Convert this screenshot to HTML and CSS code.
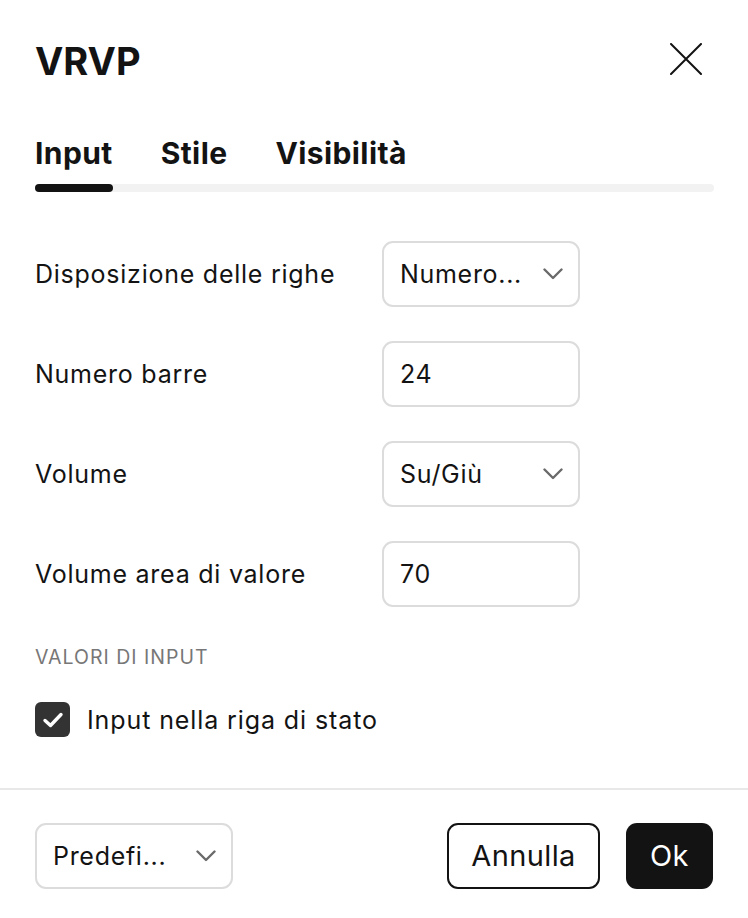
FILE: index.html
```html
<!DOCTYPE html>
<html lang="it">
<head>
<meta charset="utf-8">
<title>VRVP</title>
<link rel="stylesheet" href="styles.css">
</head>
<body>
<div class="dialog">
  <header class="head">
    <h1 class="title">VRVP</h1>
    <button class="close" aria-label="Chiudi">
      <svg width="32" height="32" viewBox="0 0 32 32"><path d="M1 1 L31 31 M31 1 L1 31" stroke="#131313" stroke-width="2" stroke-linecap="round" fill="none"/></svg>
    </button>
  </header>
  <nav class="tabs">
    <div class="tab-row">
      <span class="tab active">Input</span>
      <span class="tab">Stile</span>
      <span class="tab">Visibilità</span>
    </div>
    <div class="track"><div class="indicator"></div></div>
  </nav>
  <section class="body">
    <div class="row">
      <span class="label">Disposizione delle righe</span>
      <div class="field select"><span>Numero...</span><svg class="chev" width="20" height="12" viewBox="0 0 20 12"><path d="M1.5 1.5 L10 10 L18.5 1.5" stroke="#6a6a6a" stroke-width="2.4" fill="none" stroke-linecap="round" stroke-linejoin="round"/></svg></div>
    </div>
    <div class="row">
      <span class="label">Numero barre</span>
      <div class="field"><span>24</span></div>
    </div>
    <div class="row">
      <span class="label">Volume</span>
      <div class="field select"><span>Su/Giù</span><svg class="chev" width="20" height="12" viewBox="0 0 20 12"><path d="M1.5 1.5 L10 10 L18.5 1.5" stroke="#6a6a6a" stroke-width="2.4" fill="none" stroke-linecap="round" stroke-linejoin="round"/></svg></div>
    </div>
    <div class="row">
      <span class="label">Volume area di valore</span>
      <div class="field"><span>70</span></div>
    </div>
    <div class="section-title">VALORI DI INPUT</div>
    <label class="check">
      <span class="box"><svg width="22" height="16" viewBox="0 0 22 16"><path d="M3 8.5 L8.5 13.5 L19 2.5" stroke="#fff" stroke-width="3.4" fill="none" stroke-linecap="round" stroke-linejoin="round"/></svg></span>
      <span class="check-label">Input nella riga di stato</span>
    </label>
  </section>
  <footer class="foot">
    <div class="field select preset"><span>Predefi...</span><svg class="chev" width="20" height="12" viewBox="0 0 20 12"><path d="M1.5 1.5 L10 10 L18.5 1.5" stroke="#6a6a6a" stroke-width="2.4" fill="none" stroke-linecap="round" stroke-linejoin="round"/></svg></div>
    <div class="actions">
      <button class="btn btn-outline">Annulla</button>
      <button class="btn btn-primary">Ok</button>
    </div>
  </footer>
</div>
</body>
</html>
```
FILE: styles.css
```css
* { box-sizing: border-box; }
html, body { margin: 0; padding: 0; background: #fff; }
body { font-family: Inter, "Noto Sans", sans-serif; color: #131313; }
.dialog { width: 748px; height: 918px; display: flex; flex-direction: column; }
.head { display: flex; align-items: flex-start; justify-content: space-between; padding: 38px 46px 0 35px; }
.title { margin: 0; font-size: 38px; font-weight: 700; line-height: 46px; letter-spacing: 0; }
.close { border: 0; background: none; padding: 0; width: 32px; height: 32px; display: flex; cursor: pointer; margin-top: 5px; }
.tabs { padding: 51px 34px 0 35px; }
.tab-row { display: flex; gap: 48px; height: 49px; align-items: flex-start; }
.tab { font-size: 30px; font-weight: 700; line-height: 36px; letter-spacing: 0.4px; }
.track { height: 8px; border-radius: 4px; background: #f2f2f2; }
.indicator { width: 78px; height: 8px; border-radius: 4px; background: #131313; }
.body { padding: 49px 35px 0 35px; flex: 1; }
.row { display: flex; align-items: center; height: 66px; margin-bottom: 34px; }
.label { width: 347px; font-size: 25px; line-height: 30px; letter-spacing: 0.75px; }
.field { width: 198px; height: 66px; border: 2px solid #dcdcdc; border-radius: 11px; display: flex; align-items: center; justify-content: space-between; padding: 0 15px 0 16px; font-size: 25px; letter-spacing: 0.7px; }
.chev { flex: none; }
.section-title { font-size: 19.5px; color: #777; margin-top: 38px; line-height: 24px; letter-spacing: 1px; }
.check { display: flex; align-items: center; gap: 17px; margin-top: 33px; }
.box { width: 35px; height: 35px; border-radius: 6px; background: #333; display: flex; align-items: center; justify-content: center; }
.check-label { font-size: 25px; letter-spacing: 0.9px; }
.foot { border-top: 2px solid #e8e8e8; height: 130px; display: flex; align-items: center; justify-content: space-between; padding: 3px 35px 0 35px; flex: none; }
.actions { display: flex; gap: 26px; }
.btn { height: 66px; border-radius: 11px; font-family: inherit; font-size: 29px; padding: 0; letter-spacing: 0.4px; }
.btn-outline { background: #fff; border: 2px solid #131313; color: #131313; width: 153px; }
.btn-primary { background: #131313; border: 0; color: #fff; width: 87px; }
```
